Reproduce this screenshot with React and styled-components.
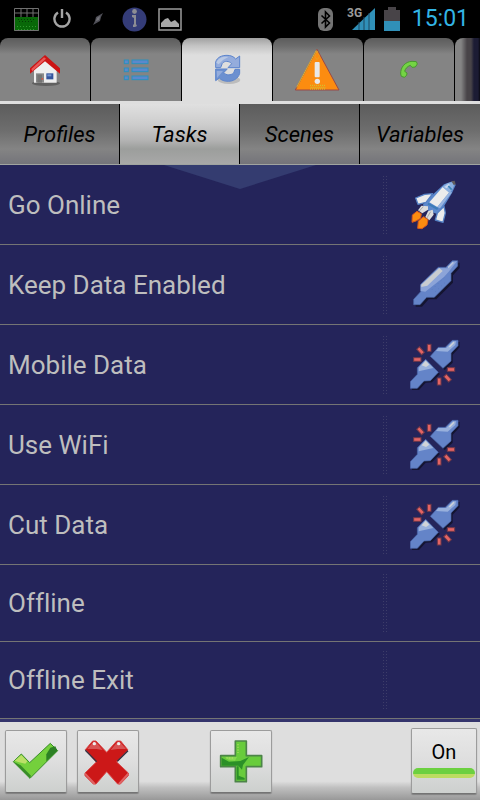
import React, { useState } from 'react';
import styled, { createGlobalStyle } from 'styled-components';

const GlobalStyle = createGlobalStyle`
  * {
    box-sizing: border-box;
  }

  body {
    margin: 0;
    background-color: #000;
    font-family: Roboto, "Liberation Sans", sans-serif;
    font-variant-ligatures: none;
  }

  button {
    margin: 0;
    padding: 0;
    border: none;
    font-family: inherit;
    color: inherit;
  }

  svg {
    display: block;
  }
`;

const Screen = styled.div`
  display: flex;
  flex-direction: column;
  min-height: 100vh;
  background-color: #24245a;
`;

const StatusBar = styled.header`
  display: flex;
  align-items: center;
  justify-content: space-between;
  height: 38px;
  padding: 0 11px 0 8px;
  background-color: #000;
`;

const Notifications = styled.div`
  display: grid;
  grid-template-columns: repeat(5, 36px);
  align-items: center;
  justify-items: center;
`;

const SystemIcons = styled.div`
  display: flex;
  align-items: center;
  gap: ${({ $gap }) => $gap};
`;

const Clock = styled.time`
  margin-left: 4px;
  font-size: 23px;
  line-height: 38px;
  color: #33b5e5;
`;

const TabStrip = styled.nav`
  display: flex;
  gap: 1px;
  height: 66px;
  overflow: hidden;
  background-color: #000;
  border-bottom: 3px solid #dedede;
`;

const Tab = styled.button`
  display: flex;
  flex: 0 0 90px;
  align-items: center;
  justify-content: center;
  border-radius: 8px 8px 0 0;
  background: ${({ $active }) =>
    $active
      ? 'linear-gradient(#a0a0a0, #c4c4c4 8px, #dedede 17px)'
      : 'linear-gradient(#5c5c5c, #6c6c6c 8px, #848484 16px)'};
`;

const EdgeTab = styled(Tab)`
  background: linear-gradient(90deg, #848484 6px, #484448 12px, #484448 16px, #1c1c34 19px, #1c1c34 23px, #000 26px);
`;

const SubTabs = styled.div`
  display: grid;
  grid-template-columns: repeat(4, 1fr);
  height: 61px;
  border-bottom: 1px solid #a0a4a0;
`;

const SubTab = styled.button`
  border-right: 1px solid #000;
  background: ${({ $active }) =>
    $active
      ? 'linear-gradient(#e0e0e0, #cccccc 35%, #b4b4b4 60%, #9c9e9c 75%, #a8a8a8)'
      : 'linear-gradient(#5c5c5c, #6e6e6e 45%, #848484 75%, #74747a)'};
  color: #000;
  font-size: 22px;
  font-style: italic;

  &:last-child {
    border-right: none;
  }
`;

const TaskArea = styled.main`
  position: relative;
  flex: 1;
`;

const Pointer = styled.svg`
  position: absolute;
  top: 0;
  left: 50%;
  transform: translateX(-50%);
`;

const TaskList = styled.ul`
  position: relative;
  margin: 0;
  padding: 0;
  list-style: none;
`;

const TaskRow = styled.li`
  display: flex;
  align-items: center;
  height: ${({ $compact }) => ($compact ? '77px' : '80px')};
  padding: 0 20px 0 8px;
  border-bottom: 1px solid #747474;
`;

const TaskName = styled.span`
  flex: 1;
  color: #bebebe;
  font-size: 26px;
  line-height: 32px;
`;

const Grip = styled.span`
  width: 6px;
  height: 60px;
  margin-right: 22px;
  background: radial-gradient(#484870 1px, transparent 1px) 0 0 / 3px 3px;
  opacity: 0.7;
`;

const IconSlot = styled.span`
  width: 50px;
  height: 52px;
`;

const Toolbar = styled.footer`
  display: flex;
  align-items: center;
  justify-content: space-between;
  height: 81px;
  padding: 0 3px 0 5px;
  border-top: 3px solid #34346c;
  background: linear-gradient(#dedede 76%, #c0c0c0 84%, #989898);
`;

const ToolGroup = styled.div`
  display: flex;
  flex: 1;
  gap: 10px;
  justify-content: ${({ $align }) => $align};
`;

const ToolButton = styled.button`
  display: flex;
  flex-direction: column;
  align-items: center;
  justify-content: center;
  width: 62px;
  height: 63px;
  border: 1px solid #9c9c9c;
  border-bottom-color: #747474;
  border-radius: 2px;
  background: linear-gradient(#e8e8e8, #dedede 50%, #cdd0ce);
  box-shadow: 0 1px 1px #808080;
`;

const ToggleButton = styled(ToolButton)`
  width: 66px;
  height: 66px;
  padding-bottom: 4px;
  color: #000;
  font-size: 20px;
  line-height: 24px;
`;

const OnBar = styled.span`
  width: 62px;
  height: 10px;
  margin-top: 4px;
  border-radius: 5px;
  background: linear-gradient(#6cd040 60%, #bcdc60 60%);
`;

const GridIcon = () => (
  <svg width="25" height="23" viewBox="0 0 25 23">
    <path d="M0 9h25v14H0z" fill="#086808" />
    <path d="M.5 .5h24v22H.5zM0 5h25M7 0v9M13 0v9M19 0v9" fill="none" stroke="#707070" />
    <path d="M4 11.500h17M5 13.500h15" stroke="#043804" strokeDasharray="1 2" />
    <path d="M3 18.500h19M4 21.500h17" stroke="#309830" strokeDasharray="1 2" />
  </svg>
);

const PowerIcon = () => (
  <svg width="18" height="20" viewBox="0 0 18 20" fill="none" stroke="#a4a4a4" strokeWidth="2.400">
    <path d="M5 3.500a7.600 7.600 0 1 0 8 0M9 0v9" />
  </svg>
);

const BoltIcon = () => (
  <svg width="10" height="12" viewBox="0 0 10 12">
    <path d="M10 0L3 4 2 8 0 12 7 8 8 4z" fill="#505058" />
    <path d="M7 3L4 5 3 8 6 7z" fill="#74747a" />
  </svg>
);

const InfoIcon = () => (
  <svg width="25" height="25" viewBox="0 0 25 25">
    <circle cx="12.500" cy="12.500" r="12" fill="#343c78" />
    <circle cx="12.500" cy="4.500" r="2.400" fill="#8c8c94" />
    <path d="M10 8h4v9l1 2-2 1h-2v-2l1-1v-6l-2-1z" fill="#8c8c94" />
  </svg>
);

const PictureIcon = () => (
  <svg width="24" height="23" viewBox="0 0 24 23">
    <path d="M1 1h22v21H1z" fill="#000" stroke="#9c9c9c" strokeWidth="1.500" />
    <path d="M3 19v-4l4-4 3-1 3 4 4-2 4 4v3z" fill="#a8a8a8" />
  </svg>
);

const BluetoothIcon = () => (
  <svg width="15" height="23" viewBox="0 0 15 23">
    <rect width="15" height="23" rx="6" fill="#747474" />
    <path d="M3.500 7.500l8 7.500-4 4V4l4 4-8 7.500" fill="none" stroke="#000" strokeWidth="1.600" />
  </svg>
);

const SignalIcon = () => (
  <svg width="29" height="24" viewBox="0 0 29 24">
    <path d="M28 1v22H5z" fill="#3090b8" />
    <path d="M12 15v8M17 10v13M22 6v17" stroke="#1c4860" strokeWidth="1" />
    <text x="0" y="10" fill="#9c9c9c" fontSize="12" fontWeight="700">3G</text>
  </svg>
);

const BatteryIcon = () => (
  <svg width="16" height="24" viewBox="0 0 16 24">
    <path d="M0 3h4V0h8v3h4v12H0z" fill="#484448" />
    <path d="M0 14h16v10H0z" fill="#3090b8" />
  </svg>
);

const HomeIcon = () => (
  <svg width="48" height="48" viewBox="63 138 144 144">
    <ellipse cx="138" cy="250" rx="42" ry="8" fill="#606060" />
    <path d="M102 208L136 180 170 208V248H102z" fill="#eeeeee" />
    <path d="M108 220h24v28h-24z" fill="#888888" />
    <path d="M112 224h14v24h-14z" fill="#747474" />
    <path d="M139 220h21v18h-21z" fill="#34549c" />
    <path d="M142 223h12v6h-12z" fill="#7494d0" />
    <path d="M125 234h4v5h-4z" fill="#e05040" />
    <path d="M90 205L135 165 180 205V221L135 184 90 221z" fill="#cc1414" />
    <path d="M94 207L132 172 138 176 97 214z" fill="#e85858" />
  </svg>
);

const ListIcon = () => (
  <svg width="48" height="48" viewBox="336 138 144 144">
    {[180, 204, 228].map((y) => (
      <g key={y} fill="#5c88cc" stroke="#2c90bc" strokeWidth="3">
        <rect x="373" y={y} width="12" height="11" />
        <rect x="396" y={y} width="48" height="11" />
      </g>
    ))}
  </svg>
);

const SyncIcon = () => (
  <svg width="48" height="48" viewBox="0 0 144 144">
    <ellipse cx="78" cy="102" rx="34" ry="12" fill="#bcbcbc" />
    <g stroke="#5c84cc" strokeWidth="3" strokeLinejoin="round">
      <path d="M38 65V48C42 34 56 28 72 28 84 28 92 32 98 39L110 30V65H75L86 53C78 44 64 44 58 52L53 65z" fill="#94acdc" />
      <path d="M110 70V82C106 98 90 106 76 106 62 106 54 102 49 96L38 104V69H73L62 80C70 89 84 88 92 81L96 70z" fill="#6c90d0" />
    </g>
    <path d="M40 50C46 34 62 30 76 33L60 42 47 55z" fill="#b8c8e4" />
    <path d="M41 75H60L42 96z" fill="#94acdc" />
  </svg>
);

const WarningIcon = () => (
  <svg width="48" height="48" viewBox="162 138 144 144">
    <path d="M231 148L297 270H166z" fill="#fc8c10" stroke="#984848" strokeWidth="3" />
    <path d="M229 151L170 262" stroke="#d8b438" strokeWidth="3" />
    <path d="M231 153L239 168 231 180 224 168z" fill="none" stroke="#d8b438" strokeWidth="2" strokeDasharray="3 2" />
    <rect x="224" y="186" width="15" height="46" rx="3" fill="#e8e8e8" />
    <circle cx="232" cy="244" r="8" fill="#e8e8e8" />
    <path d="M210 256h48M212 262h44M210 267h48" stroke="#c8cc38" strokeWidth="3" strokeDasharray="3 3" />
  </svg>
);

const PhoneIcon = () => (
  <svg width="48" height="48" viewBox="435 138 144 144">
    <path
      d="M482 222C481 202 495 185 516 184L529 185 532 192 526 201 516 202 511 196C502 199 496 206 494 214L501 219 500 226 493 232 484 229z"
      fill="#74d444"
      stroke="#489830"
      strokeWidth="3"
    />
  </svg>
);

const RocketIcon = () => (
  <svg width="50" height="52" viewBox="120 42 150 156">
    <path d="M178 98L222 58 250 48 257 60 246 84 222 124 204 148 176 138 158 120z" fill="#5c88cc" />
    <g stroke="#5480c4" strokeWidth="4" strokeLinejoin="round">
      <path d="M137 99L164 88 188 86 168 112 144 118z" fill="#ececec" />
      <path d="M222 124L226 144 219 172 196 165 202 144z" fill="#ececec" />
    </g>
    <path d="M178 112L218 66 238 82 202 126z" fill="#ececec" />
    <path d="M218 66C228 54 240 51 252 52 253 62 250 74 238 84z" fill="#8cb0e0" />
    <path d="M223 66L236 56 240 60 230 70z" fill="#c8d8f0" />
    <path d="M235 63L245 74" stroke="#3c84b8" strokeWidth="5" />
    <path d="M244 49L254 47 257 58 251 60z" fill="#605c5c" />
    <path d="M238 82L246 82 210 130 202 126z" fill="#98b4e0" />
    <path d="M174 116L203 132" stroke="#3c7cb8" strokeWidth="6" />
    <path d="M144 136L154 122 174 124 174 134 157 145z" fill="#dcdcdc" />
    <path d="M166 156L174 139 188 134 191 149 178 166z" fill="#dcdcdc" />
    <path d="M148 138L160 125M170 160L182 140" stroke="#a8a8a8" strokeWidth="3" />
    <path d="M141 139L154 146 152 160 138 168 126 172 127 150z" fill="#fc8c10" stroke="#d85820" strokeWidth="3" />
    <path d="M161 155L174 164 171 180 156 191 143 190 145 168z" fill="#fc8c10" stroke="#d85820" strokeWidth="3" />
  </svg>
);

const connectedPath =
  'M247 47H263V63L243 85V107L193 157H170L150 179H131V163L152 140V118L205 67H228z';

const ConnectedIcon = () => (
  <svg width="50" height="52" viewBox="120 42 150 156">
    <path d={connectedPath} transform="translate(6 6)" fill="#141430" />
    <path d={connectedPath} fill="#6484c8" stroke="#4c68a8" strokeWidth="2" />
    <path d="M152 120L205 69 232 70 249 50 261 49 236 80 222 96 166 140 152 138z" fill="#8ca4d8" />
    <path d="M208 69L218 78 172 122 154 126V119z" fill="#c8ccd0" />
    <path d="M234 68L250 52" stroke="#b8c4dc" strokeWidth="5" />
    <path d="M186 134L222 98M196 140L226 112" stroke="#5474b8" strokeWidth="2" strokeDasharray="3 9" />
  </svg>
);

const upperPlug = 'M247 46H264V62L243 84V108L219 130 181 94 205 67H226z';
const lowerPlug = 'M167 103L205 142 181 167 162 168 142 190H121V170L142 148V128z';

const DisconnectedIcon = () => (
  <svg width="50" height="52" viewBox="120 42 150 156">
    <g transform="translate(5 5)" fill="#141430">
      <path d={upperPlug} />
      <path d={lowerPlug} />
    </g>
    <g fill="#6484c8" stroke="#4c68ac" strokeWidth="2">
      <path d={upperPlug} />
      <path d={lowerPlug} />
    </g>
    <path d="M205 69L228 69 249 49 258 49 256 60 233 80 198 78z" fill="#98b0dc" />
    <path d="M167 105L190 129 146 139 146 128z" fill="#98b0dc" />
    <path d="M167 107L178 119 168 126 155 121z" fill="#d0d4d8" />
    <path d="M238 66L252 52" stroke="#d0d4d8" strokeWidth="4" />
    <g fill="#e46464" stroke="#703848" strokeWidth="3">
      <rect x="172" y="58" width="11" height="21" />
      <rect x="131" y="98" width="22" height="11" />
      <rect x="232" y="128" width="22" height="11" />
      <rect x="202" y="159" width="11" height="21" />
      <rect x="141" y="72" width="22" height="11" transform="rotate(48 152 77)" />
      <rect x="222" y="154" width="22" height="11" transform="rotate(48 233 159)" />
    </g>
  </svg>
);

const CheckIcon = () => (
  <svg width="48" height="48" viewBox="36 80 144 144">
    <path d="M40 154L64 131 89 157 151 99 173 121 90 204z" fill="#74d03c" stroke="#388c28" strokeWidth="3" />
    <path d="M44 151L64 134 82 153 76 160 57 156z" fill="#bce068" />
    <path d="M151 112L166 108 172 121 139 153 139 132z" fill="#2c8024" />
    <path d="M40 154L90 204 93 196 62 165z" fill="#388c28" />
  </svg>
);

const CrossIcon = () => (
  <svg width="48" height="48" viewBox="252 80 144 144">
    <path
      d="M256 118L278 92 288 92 320 126 350 92 362 92 384 119 350 155 385 188 385 196 361 221 353 221 320 184 288 221 280 221 255 196 255 188 289 155z"
      fill="#cc1818"
      stroke="#d84848"
      strokeWidth="3"
    />
    <path d="M262 116L280 94 290 97 308 119 290 116z" fill="#d85454" />
    <path d="M332 119L352 95 362 97 378 116 352 116z" fill="#d85454" />
    <path d="M256 120L290 154M384 121L352 153" stroke="#383040" strokeWidth="4" />
    <path d="M255 190L284 221M385 190L357 221" stroke="#e06464" strokeWidth="6" />
    <circle cx="283" cy="100" r="5" fill="#eeeeee" />
    <circle cx="356" cy="100" r="5" fill="#eeeeee" />
  </svg>
);

const PlusIcon = () => (
  <svg width="48" height="48" viewBox="48 80 144 144">
    <path
      d="M103 92H136V136H182V169H136V214H103V169H59V136H103z"
      fill="#68cc3c"
      stroke="#4c8448"
      strokeWidth="5"
      strokeLinejoin="round"
    />
    <path d="M62 142L84 154 118 152 144 140 126 164 123 178 112 166H62z" fill="#2c9028" />
    <path d="M107 168V208H131V203L113 196V168z" fill="#2c9028" />
    <path d="M72 140H108L102 151 84 150z" fill="#84d850" />
    <path d="M111 101V128M76 143H98" stroke="#b8dc68" strokeWidth="3" strokeDasharray="4 4" />
  </svg>
);

const tabs = [
  { label: 'Home', Icon: HomeIcon },
  { label: 'List', Icon: ListIcon },
  { label: 'Sync', Icon: SyncIcon },
  { label: 'Alerts', Icon: WarningIcon },
  { label: 'Phone', Icon: PhoneIcon },
];

const sections = ['Profiles', 'Tasks', 'Scenes', 'Variables'];

const tasks = [
  { name: 'Go Online', Icon: RocketIcon },
  { name: 'Keep Data Enabled', Icon: ConnectedIcon },
  { name: 'Mobile Data', Icon: DisconnectedIcon },
  { name: 'Use WiFi', Icon: DisconnectedIcon },
  { name: 'Cut Data', Icon: DisconnectedIcon },
  { name: 'Offline' },
  { name: 'Offline Exit' },
];

const App = () => {
  const [tab, setTab] = useState('Sync');
  const [section, setSection] = useState('Tasks');

  return (
    <Screen>
      <GlobalStyle />
      <StatusBar>
        <Notifications>
          <GridIcon />
          <PowerIcon />
          <BoltIcon />
          <InfoIcon />
          <PictureIcon />
        </Notifications>
        <SystemIcons $gap="14px">
          <BluetoothIcon />
          <SystemIcons $gap="8px">
            <SignalIcon />
            <BatteryIcon />
            <Clock>15:01</Clock>
          </SystemIcons>
        </SystemIcons>
      </StatusBar>
      <TabStrip>
        {tabs.map(({ label, Icon }) => (
          <Tab key={label} aria-label={label} $active={tab === label} onClick={() => setTab(label)}>
            <Icon />
          </Tab>
        ))}
        <EdgeTab aria-label="More" />
      </TabStrip>
      <SubTabs>
        {sections.map((name) => (
          <SubTab key={name} $active={section === name} onClick={() => setSection(name)}>
            {name}
          </SubTab>
        ))}
      </SubTabs>
      <TaskArea>
        <Pointer width="152" height="24" viewBox="0 0 152 24">
          <path d="M0 0H152L76 24z" fill="#343c70" />
        </Pointer>
        <TaskList>
          {tasks.map(({ name, Icon }) => (
            <TaskRow key={name} $compact={!Icon}>
              <TaskName>{name}</TaskName>
              <Grip />
              <IconSlot>{Icon && <Icon />}</IconSlot>
            </TaskRow>
          ))}
        </TaskList>
      </TaskArea>
      <Toolbar>
        <ToolGroup $align="flex-start">
          <ToolButton aria-label="Accept">
            <CheckIcon />
          </ToolButton>
          <ToolButton aria-label="Cancel">
            <CrossIcon />
          </ToolButton>
        </ToolGroup>
        <ToolButton aria-label="Add">
          <PlusIcon />
        </ToolButton>
        <ToolGroup $align="flex-end">
          <ToggleButton>
            On
            <OnBar />
          </ToggleButton>
        </ToolGroup>
      </Toolbar>
    </Screen>
  );
};

export default App;
